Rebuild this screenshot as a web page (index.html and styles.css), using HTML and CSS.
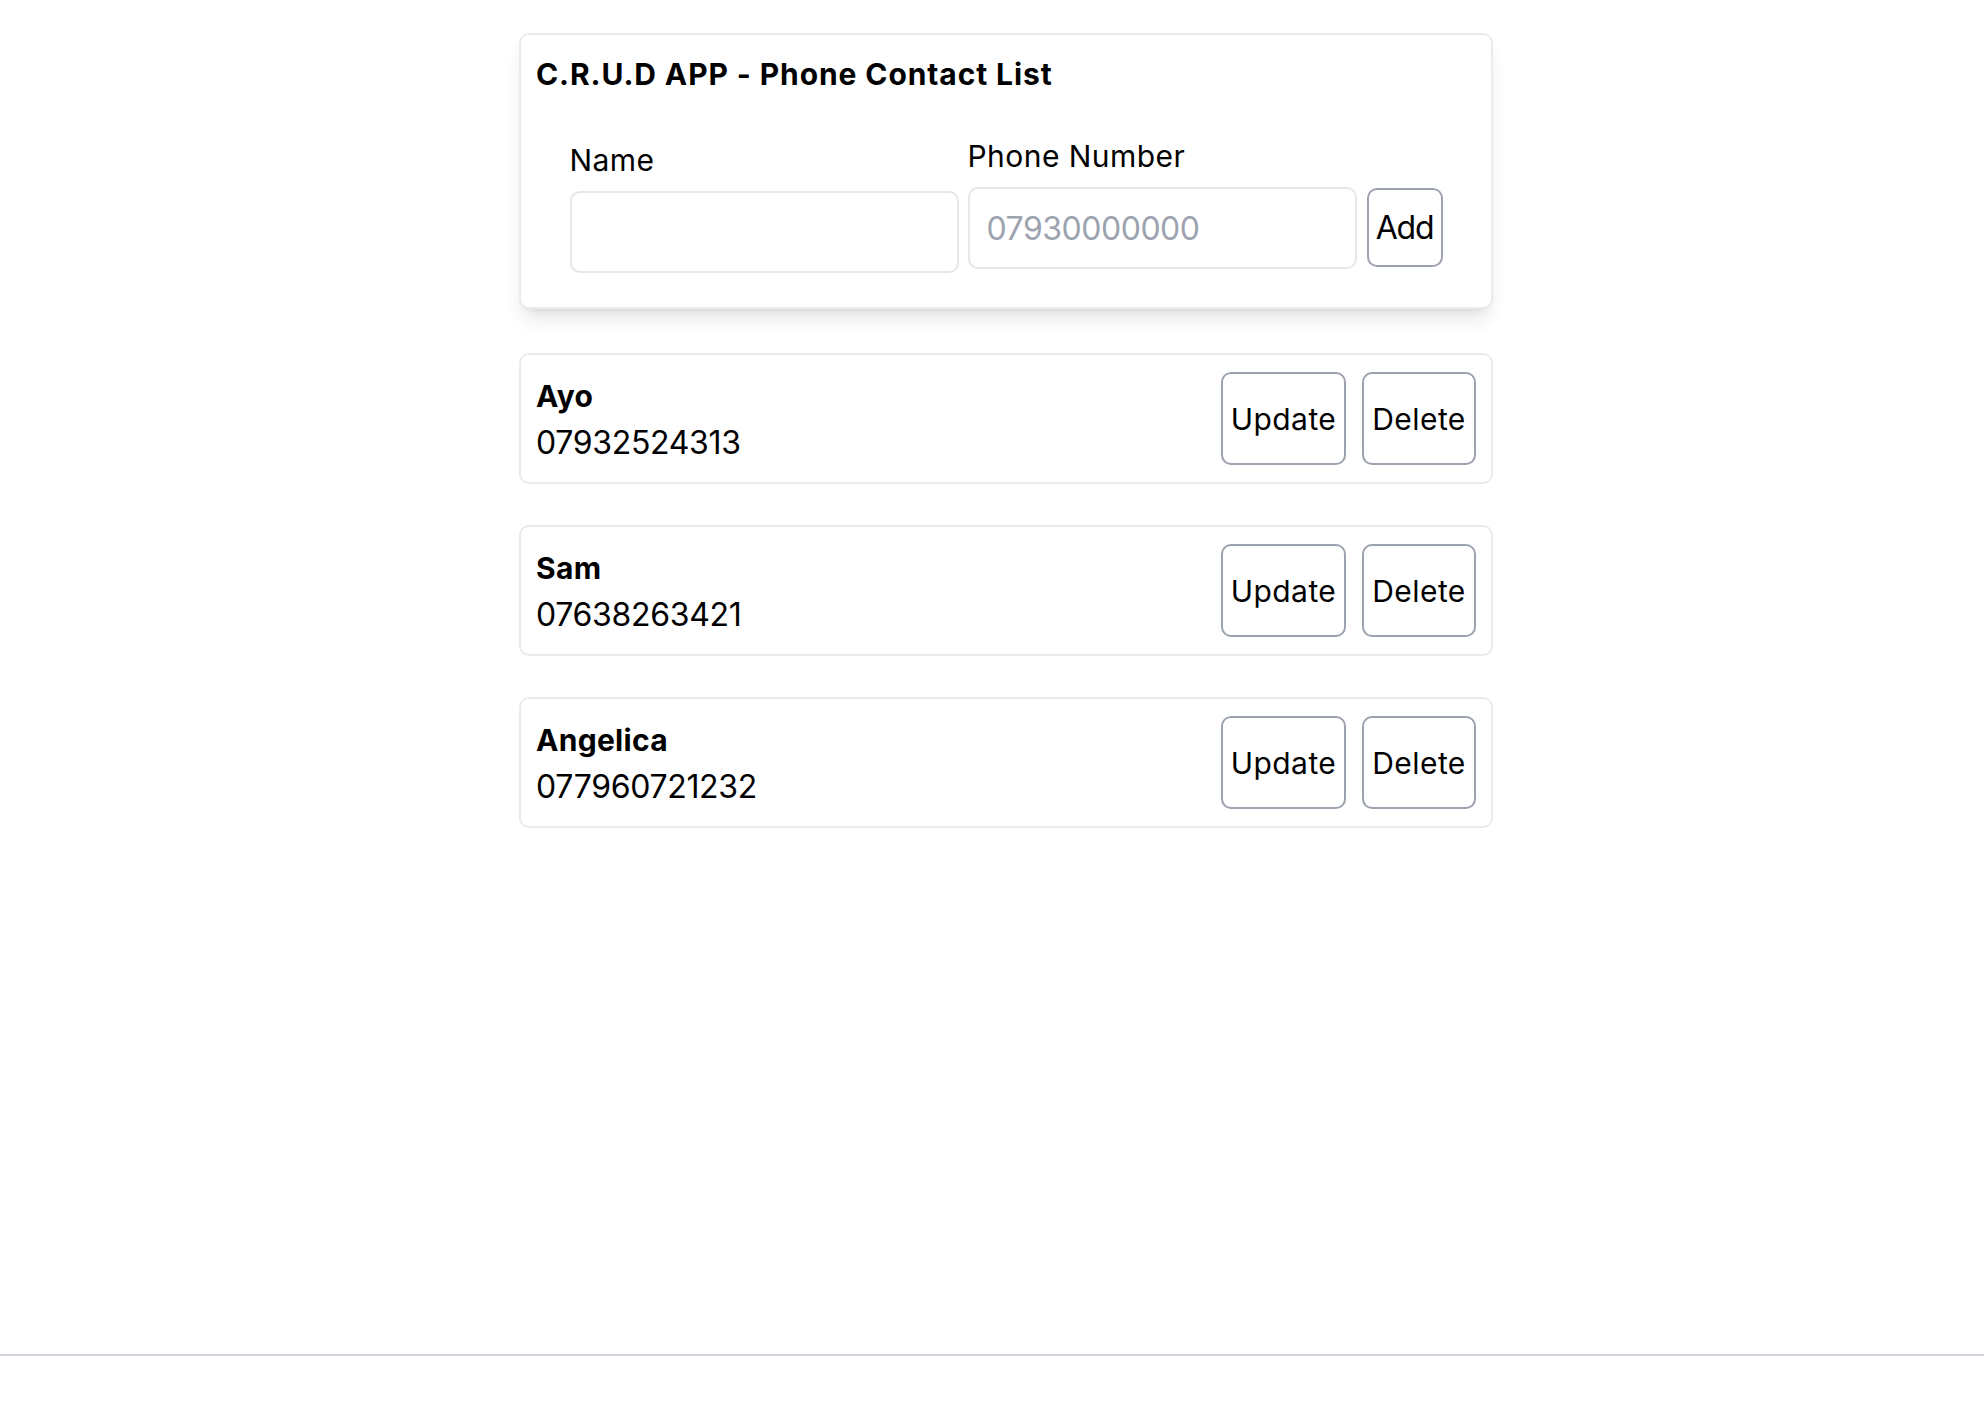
FILE: index.html
```html
<!DOCTYPE html>
<html lang="en">
<head>
<meta charset="utf-8">
<title>C.R.U.D APP - Phone Contact List</title>
<link rel="stylesheet" href="styles.css">
</head>
<body>
<main class="page">
  <div class="container">
    <section class="form-card">
      <h1 class="title">C.R.U.D APP - Phone Contact List</h1>
      <form class="form-row">
        <div class="field field-name">
          <label class="label" for="name">Name</label>
          <input class="input" id="name" type="text">
        </div>
        <div class="field">
          <label class="label" for="phone">Phone Number</label>
          <input class="input" id="phone" type="text" placeholder="07930000000">
        </div>
        <button class="btn btn-add" type="button">Add</button>
      </form>
    </section>

    <ul class="contacts">
      <li class="contact">
        <div class="info">
          <div class="name">Ayo</div>
          <div class="phone">07932524313</div>
        </div>
        <div class="actions">
          <button class="btn btn-update" type="button">Update</button>
          <button class="btn btn-delete" type="button">Delete</button>
        </div>
      </li>
      <li class="contact">
        <div class="info">
          <div class="name">Sam</div>
          <div class="phone">07638263421</div>
        </div>
        <div class="actions">
          <button class="btn btn-update" type="button">Update</button>
          <button class="btn btn-delete" type="button">Delete</button>
        </div>
      </li>
      <li class="contact">
        <div class="info">
          <div class="name">Angelica</div>
          <div class="phone">077960721232</div>
        </div>
        <div class="actions">
          <button class="btn btn-update" type="button">Update</button>
          <button class="btn btn-delete" type="button">Delete</button>
        </div>
      </li>
    </ul>
  </div>
</main>
<footer class="footer"></footer>
</body>
</html>
```

FILE: styles.css
```css
* { box-sizing: border-box; }

html, body {
  margin: 0;
  padding: 0;
  background: #ffffff;
  color: #000000;
  font-family: Inter, "Liberation Sans", Arial, sans-serif;
}

.page {
  height: 1354px;
  padding-top: 33px;
}

.container {
  margin-left: 519px;
  width: 974px;
}

.form-card {
  border: 2px solid #ebebef;
  border-radius: 10px;
  padding: 17px 15px 34px;
  box-shadow: 0 14px 20px -5px rgba(0, 0, 0, 0.11), 0 6px 8px -6px rgba(0, 0, 0, 0.1);
  background: #fff;
}

.title {
  margin: 0 0 43px;
  font-size: 30px;
  line-height: 44px;
  font-weight: 700;
  letter-spacing: 0.03em;
}

.form-row {
  display: flex;
  justify-content: center;
  align-items: flex-start;
  gap: 9px;
  margin: 0;
}

.field {
  display: flex;
  flex-direction: column;
}

.field-name {
  margin-top: 4px;
}

.label {
  font-size: 30px;
  line-height: 34px;
  margin-bottom: 14px;
  letter-spacing: 0.015em;
}

.input {
  width: 389px;
  height: 82px;
  border: 2px solid #e5e7eb;
  border-radius: 10px;
  padding: 0 17px;
  font-family: inherit;
  font-size: 32px;
  letter-spacing: -0.015em;
  color: #000;
  background: #fff;
  outline: none;
}

.input::placeholder {
  color: #9ca3af;
}

.btn {
  background: #fff;
  border: 2px solid #9ca3af;
  border-radius: 10px;
  font-family: inherit;
  color: #000;
  padding: 0;
  cursor: pointer;
}

.btn-add {
  margin-top: 49px;
  margin-left: 1px;
  width: 76px;
  height: 79px;
  font-size: 32px;
  letter-spacing: -0.04em;
}

.contacts {
  list-style: none;
  margin: 44px 0 0;
  padding: 0;
  display: flex;
  flex-direction: column;
  gap: 41px;
}

.contact {
  display: flex;
  justify-content: space-between;
  align-items: stretch;
  border: 2px solid #ebebef;
  border-radius: 10px;
  padding: 17px 15px;
}

.info {
  display: flex;
  flex-direction: column;
}

.name {
  font-size: 30px;
  font-weight: 700;
  line-height: 49px;
  letter-spacing: 0.01em;
}

.phone {
  font-size: 32px;
  line-height: 44px;
  letter-spacing: -0.01em;
}

.actions {
  display: flex;
  gap: 16px;
}

.btn-update,
.btn-delete {
  font-size: 30px;
  letter-spacing: 0.015em;
}

.btn-update {
  width: 125px;
}

.btn-delete {
  width: 114px;
}

.footer {
  border-top: 2px solid #d1d5db;
  height: 54px;
}
```
